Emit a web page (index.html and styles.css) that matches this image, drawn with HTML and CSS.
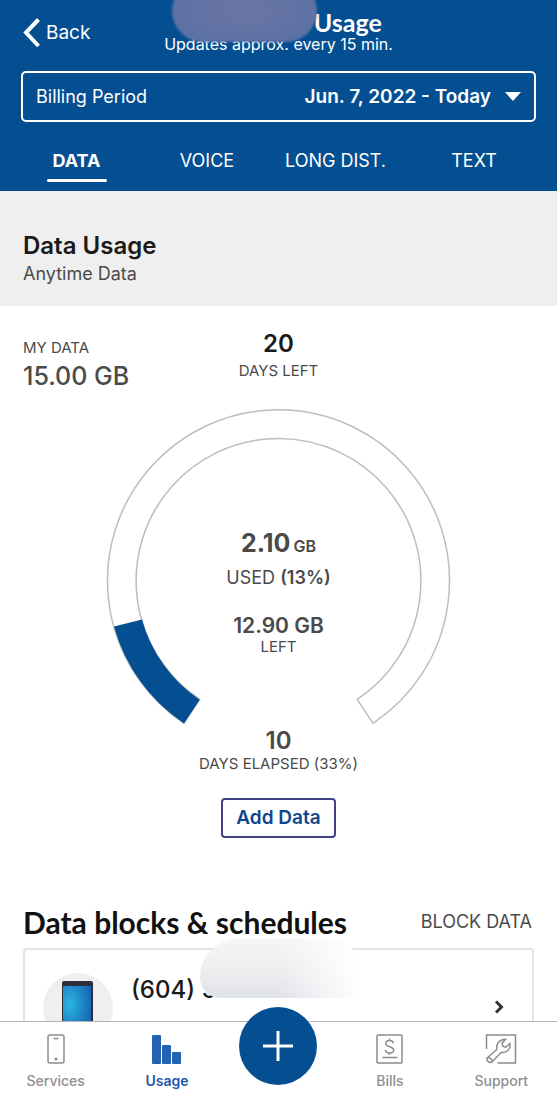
FILE: index.html
```html
<!DOCTYPE html>
<html lang="en">
<head>
<meta charset="utf-8">
<meta name="viewport" content="width=device-width, initial-scale=1">
<title>Usage</title>
<link rel="stylesheet" href="styles.css">
</head>
<body>
<div class="app">
  <header class="header">
    <div class="topbar">
      <a class="back" href="#">
        <svg class="back-icon" viewBox="0 0 18 32" aria-hidden="true"><path d="M15.5 2.5 L3 15.5 L15.5 29"/></svg>
        <span>Back</span>
      </a>
      <div class="heading">
        <h1 class="title">Usage</h1>
        <p class="updates">Updates approx. every 15 min.</p>
        <span class="title-mask"></span>
      </div>
    </div>
    <button class="period" type="button">
      <span>Billing Period</span>
      <span class="period-value">Jun. 7, 2022 - Today
        <svg class="caret" viewBox="0 0 16 9" aria-hidden="true"><path d="M0 0H16L8 9Z"/></svg>
      </span>
    </button>
    <nav class="tabs" aria-label="Usage type">
      <a class="tab active" href="#">DATA</a>
      <a class="tab" href="#">VOICE</a>
      <a class="tab" href="#">LONG DIST.</a>
      <a class="tab" href="#">TEXT</a>
    </nav>
  </header>

  <main class="content">
    <section class="banner">
      <h2 class="banner-title">Data Usage</h2>
      <p class="banner-sub">Anytime Data</p>
    </section>

    <section class="summary">
      <div class="plan">
        <p class="label">MY DATA</p>
        <p class="figure-plan">15.00 GB</p>
      </div>
      <div class="days">
        <p class="days-num dark">20</p>
        <p class="label">DAYS LEFT</p>
      </div>
    </section>

    <section class="gauge">
      <svg class="dial" viewBox="0 0 344 316" aria-hidden="true">
        <path class="track" d="M77 313.3 A171 171 0 1 1 266 313.3 L250.300 289.4 A142.4 142.4 0 1 0 92.7 289.4 Z"/>
        <path class="used" d="M77 313.5 A171 171 0 0 1 7 216.5 L35 209.500 A142.4 142.4 0 0 0 92.7 289.7 Z"/>
      </svg>
      <div class="readout">
        <p class="used-num">2.10<span class="unit">GB</span></p>
        <p class="used-label">USED <b>(13%)</b></p>
        <p class="left-num">12.90 GB</p>
        <p class="label">LEFT</p>
      </div>
    </section>

    <section class="elapsed">
      <p class="days-num">10</p>
      <p class="label">DAYS ELAPSED (33%)</p>
      <button class="add" type="button">Add Data</button>
    </section>

    <section class="blocks">
      <div class="blocks-head">
        <h2 class="blocks-title">Data blocks &amp; schedules</h2>
        <a class="block-link" href="#">BLOCK DATA</a>
      </div>
      <a class="device" href="#">
        <span class="avatar">
          <svg class="phone" viewBox="0 0 32 56" aria-hidden="true">
            <defs><radialGradient id="glow" cx=".25" cy=".4" r=".8"><stop offset="0" stop-color="#2bb4e2"/><stop offset="1" stop-color="#1564b4"/></radialGradient></defs>
            <rect width="31" height="56" rx="2" fill="#2b303c"/>
            <rect x="1" y="5" width="28" height="46" fill="url(#glow)"/>
          </svg>
        </span>
        <span class="number">(604) 5<span class="number-mask"></span></span>
        <svg class="chevron" viewBox="0 0 10 14" aria-hidden="true"><path d="M2 1.5 L7.5 7 L2 12.5"/></svg>
      </a>
    </section>
  </main>

  <nav class="bottom" aria-label="Main">
    <a class="item" href="#">
      <svg class="icon" viewBox="0 0 32 32" aria-hidden="true"><rect x="8" y="2" width="16" height="28" rx="2"/><path d="M13.500 5.500h5"/><circle cx="16" cy="26" r=".8"/></svg>
      <span>Services</span>
    </a>
    <a class="item current" href="#">
      <svg class="icon solid" viewBox="0 0 32 32" aria-hidden="true"><rect x="1" y="2" width="9" height="29" rx="1"/><rect x="11" y="12" width="9" height="19" rx="1"/><rect x="21" y="19" width="9" height="12" rx="1"/></svg>
      <span>Usage</span>
    </a>
    <div class="item">
      <button class="plus" type="button" aria-label="Add">
        <svg class="plus-icon" viewBox="0 0 32 32" aria-hidden="true"><path d="M16 1V31M1 16H31"/></svg>
      </button>
    </div>
    <a class="item" href="#">
      <svg class="icon" viewBox="0 0 32 32" aria-hidden="true"><rect x="3" y="2" width="25" height="28" rx="1"/><path d="M19.500 10.200C19 8.500 17.500 7.500 15.500 7.500c-2.300 0-3.800 1.200-3.800 3 0 4.100 8 2.400 8 6.500 0 1.900-1.800 3-4.200 3-2.200 0-3.900-1-4.300-2.800M15.500 5.500v2M15.500 20v2M8.500 24.500h15"/></svg>
      <span>Bills</span>
    </a>
    <a class="item" href="#">
      <svg class="icon" viewBox="0 0 32 32" aria-hidden="true"><path d="M1.500 16V2H30.500V30H12.500"/><path d="M2 25 L11.800 16.500 C11 11 14 6.500 20.500 6.300 L17 10.200 L18 13.300 L21 14.200 L24.800 10.500 C26 16 22 20 16.300 19.300 L7 29 A3.500 3.500 0 0 1 2 25 Z M2.500 25 C5 24 7.300 26 7.200 28.700"/></svg>
      <span>Support</span>
    </a>
  </nav>
</div>
</body>
</html>
```

FILE: styles.css
```css
* { box-sizing: border-box; }

body {
  margin: 0;
  background: #fff;
  color: #4a4a4a;
  font-family: Inter, "Liberation Sans", sans-serif;
  font-size: 16px;
  line-height: 20px;
}

h1, h2, p { margin: 0; }
a { color: inherit; text-decoration: none; }
button { font: inherit; cursor: pointer; }

.app { display: flex; flex-direction: column; height: 100vh; }

/* Header */
.header { flex: none; background: #044f92; color: #fff; }

.topbar {
  display: grid;
  grid-template-columns: 1fr auto 1fr;
  padding: 10px 23px 0;
  height: 71px;
}
.back { display: flex; align-items: center; gap: 5px; height: 46px; font-size: 19px; }
.back-icon { width: 18px; height: 32px; fill: none; stroke: #fff; stroke-width: 4; }
.heading { position: relative; }
.title {
  padding-right: 11px;
  text-align: right;
  font: 700 25px/24px Lato, sans-serif;
}
.updates { font-size: 16px; line-height: 20px; }
.title-mask {
  position: absolute;
  left: 8px;
  top: -30px;
  width: 145px;
  height: 62px;
  border-radius: 36px;
  background: radial-gradient(#6b76a6, #5870a4);
  filter: blur(1px);
}

.period {
  display: flex;
  justify-content: space-between;
  align-items: center;
  width: calc(100% - 42px);
  height: 51px;
  margin: 0 21px;
  padding: 0 13px;
  border: 2px solid #fff;
  border-radius: 5px;
  background: none;
  color: #fff;
  font-size: 18px;
}
.period-value { display: flex; align-items: center; gap: 14px; font-size: 19px; font-weight: 600; }
.caret { width: 16px; height: 9px; fill: #fff; }

.tabs {
  display: grid;
  grid-template-columns: 115fr 146fr 111fr 166fr;
  padding: 25px 0 9px 19px;
  text-align: center;
  font-size: 18px;
  line-height: 28px;
}
.tab::after {
  content: "";
  display: block;
  width: 60px;
  height: 3px;
  margin: 4px auto 0;
  border-radius: 2px;
}
.active { font-weight: 700; }
.active::after { background: #fff; }

/* Content */
.content { flex: 1; min-height: 0; overflow: hidden; }

.banner { padding: 40px 23px 19px; background: #efefef; }
.banner-title { color: #1a1a1a; font-size: 24px; font-weight: 600; line-height: 30px; }
.banner-sub { font-size: 18px; line-height: 26px; }

.summary {
  display: grid;
  grid-template-columns: 1fr auto 1fr;
  padding: 23px 23px 0;
}
.plan { padding-top: 7px; }
.label { font-size: 15px; line-height: 24px; }
.figure-plan { padding-bottom: 4px; font-size: 25px; font-weight: 500; line-height: 32px; }
.days { text-align: center; }
.days-num { font-size: 24px; font-weight: 600; line-height: 30px; }
.dark { color: #1a1a1a; }

.gauge { display: grid; justify-items: center; padding-top: 14px; }
.dial, .readout { grid-area: 1 / 1; }
.dial { width: 344px; height: 316px; overflow: visible; }
.track { fill: none; stroke: #bdbdbd; stroke-width: 1.5; }
.used { fill: #044f92; }
.readout { padding-top: 117px; text-align: center; }
.used-num { font-size: 25px; font-weight: 700; line-height: 32px; }
.unit { margin-left: 3px; font-size: 16px; font-weight: 600; }
.used-label { font-size: 18px; line-height: 32px; }
.used-label b { font-weight: 600; }
.left-num { padding-top: 20px; font-size: 21px; font-weight: 600; line-height: 24px; }
.readout .label { line-height: 18px; }

.elapsed { text-align: center; }
.elapsed .label { line-height: 16px; }
.add {
  height: 40px;
  margin-top: 26px;
  padding: 0 13px;
  border: 2px solid #3f4384;
  border-radius: 4px;
  background: #fff;
  color: #0f478c;
  font-size: 19px;
  font-weight: 600;
}

.blocks { padding: 62px 23px 0; }
.blocks-head { display: flex; justify-content: space-between; align-items: center; height: 44px; }
.blocks-title { color: #111; font: 700 30px/40px Lato, sans-serif; }
.block-link { padding-right: 2px; font-size: 18px; }
.device {
  display: flex;
  align-items: flex-start;
  height: 120px;
  margin-top: 4px;
  padding: 23px 28px 0 18px;
  border: 2px solid #e3e3e3;
  border-radius: 4px;
}
.avatar {
  display: flex;
  justify-content: center;
  width: 70px;
  height: 70px;
  padding-top: 8px;
  border-radius: 50%;
  background: #efefef;
}
.phone { width: 32px; height: 56px; }
.number {
  position: relative;
  flex: 1;
  padding-left: 18px;
  color: #1a1a1a;
  font-size: 24px;
  font-weight: 500;
  line-height: 34px;
}
.number-mask {
  position: absolute;
  left: 87px;
  top: -34px;
  width: 158px;
  height: 59px;
  border-radius: 44px 30px 0 24px;
  background:
    linear-gradient(90deg, transparent 50%, #fff),
    linear-gradient(#f5f5f6, #ececef 60%, #dfe1e9);
}
.chevron { width: 10px; height: 14px; margin-top: 27px; fill: none; stroke: #333; stroke-width: 3; }

/* Bottom navigation */
.bottom {
  position: relative;
  flex: none;
  display: grid;
  grid-template-columns: repeat(5, 1fr);
  height: 81px;
  border-top: 1px solid #b5b5b5;
  background: #fff;
  color: #8e8e93;
  font-size: 14px;
  font-weight: 500;
}
.item { display: flex; flex-direction: column; align-items: center; gap: 6px; padding-top: 11px; }
.icon { width: 32px; height: 32px; fill: none; stroke: #8c8c8c; stroke-width: 1.5; }
.solid { fill: #2264b2; stroke: none; }
.current { color: #1f57b0; font-weight: 600; }
.plus {
  display: grid;
  place-items: center;
  width: 78px;
  height: 78px;
  margin-top: -26px;
  padding: 0;
  border: 0;
  border-radius: 50%;
  background: #044f92;
}
.plus-icon { width: 32px; height: 32px; stroke: #fff; stroke-width: 3; }
```
